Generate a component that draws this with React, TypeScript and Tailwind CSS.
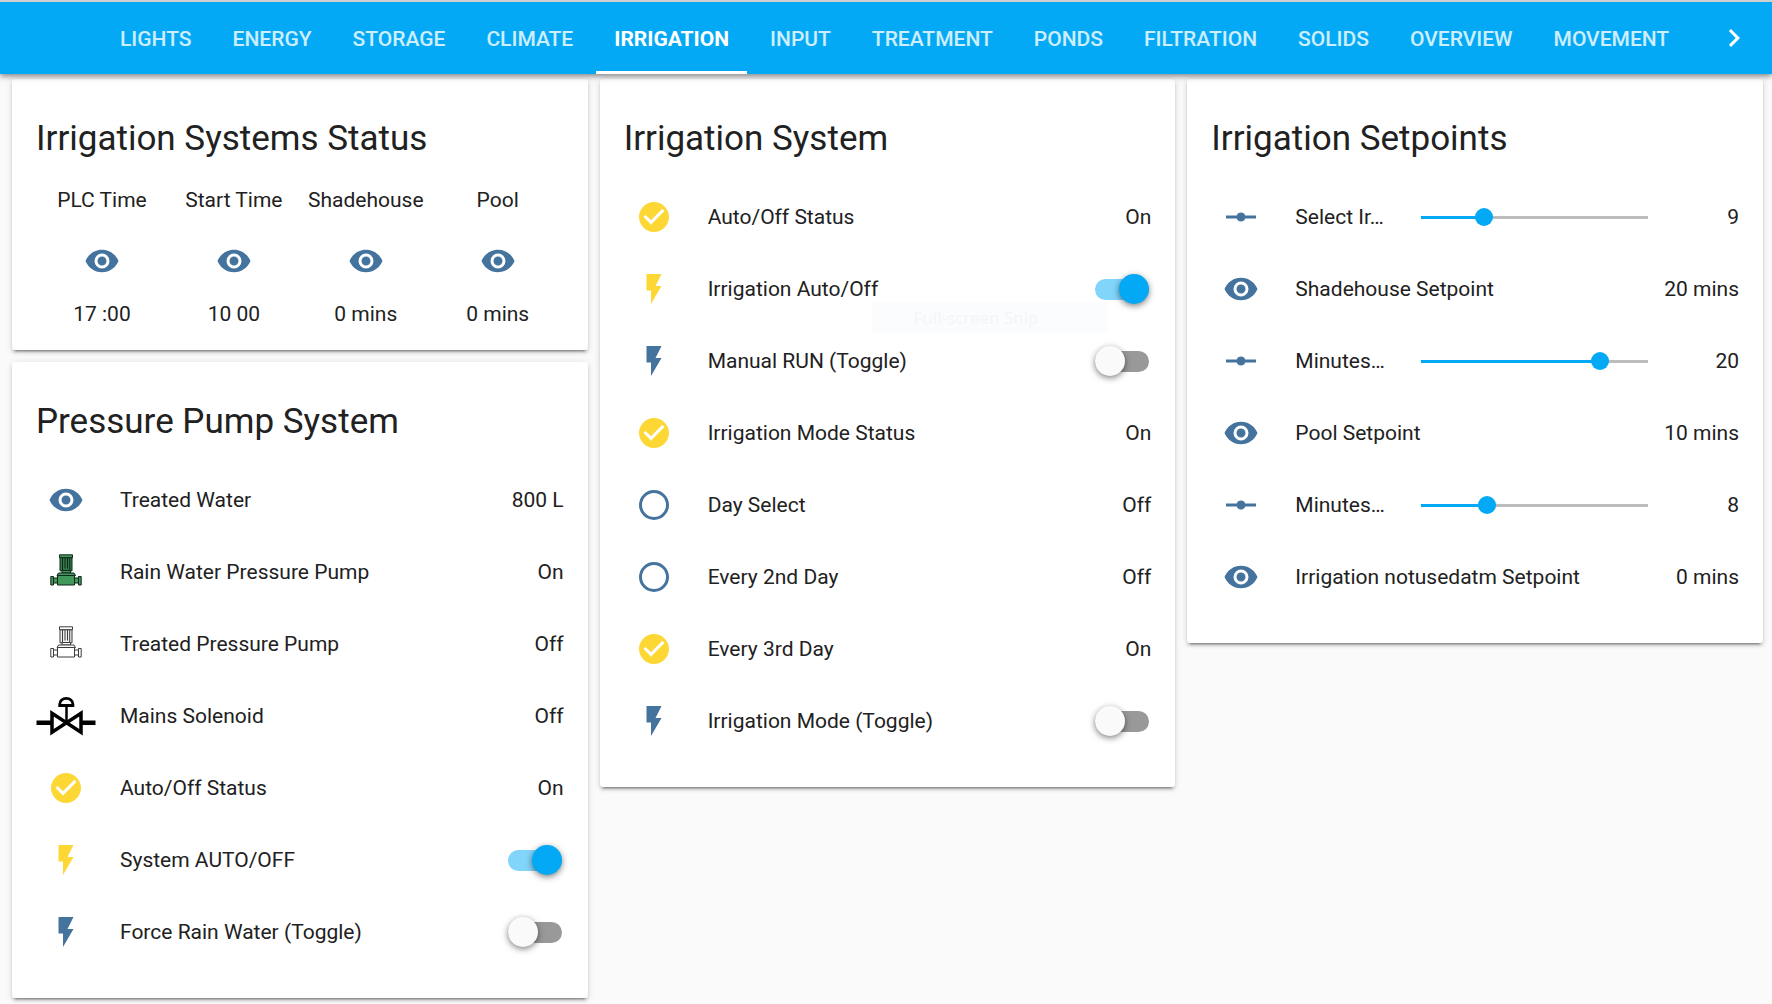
import { useState } from "react";

type IconName = "eye" | "flash" | "check" | "circle" | "ray" | "pump" | "valve";

type RowType = {
  icon: IconName;
  name: string;
  active?: boolean;
  value?: string;
  toggle?: boolean;
  slider?: { min: number; max: number; value: number };
};

const tabs = [
  "Lights",
  "Energy",
  "Storage",
  "Climate",
  "Irrigation",
  "Input",
  "Treatment",
  "Ponds",
  "Filtration",
  "Solids",
  "Overview",
  "Movement",
];

const glances = [
  { name: "PLC Time", value: "17 :00" },
  { name: "Start Time", value: "10 00" },
  { name: "Shadehouse", value: "0 mins" },
  { name: "Pool", value: "0 mins" },
];

const pumpRows: RowType[] = [
  { icon: "eye", name: "Treated Water", value: "800 L" },
  { icon: "pump", name: "Rain Water Pressure Pump", value: "On", active: true },
  { icon: "pump", name: "Treated Pressure Pump", value: "Off" },
  { icon: "valve", name: "Mains Solenoid", value: "Off" },
  { icon: "check", name: "Auto/Off Status", value: "On", active: true },
  { icon: "flash", name: "System AUTO/OFF", toggle: true, active: true },
  { icon: "flash", name: "Force Rain Water (Toggle)", toggle: true },
];

const systemRows: RowType[] = [
  { icon: "check", name: "Auto/Off Status", value: "On", active: true },
  { icon: "flash", name: "Irrigation Auto/Off", toggle: true, active: true },
  { icon: "flash", name: "Manual RUN (Toggle)", toggle: true },
  { icon: "check", name: "Irrigation Mode Status", value: "On", active: true },
  { icon: "circle", name: "Day Select", value: "Off" },
  { icon: "circle", name: "Every 2nd Day", value: "Off" },
  { icon: "check", name: "Every 3rd Day", value: "On", active: true },
  { icon: "flash", name: "Irrigation Mode (Toggle)", toggle: true },
];

const setpointRows: RowType[] = [
  { icon: "ray", name: "Select Ir…", slider: { min: 4, max: 22, value: 9 } },
  { icon: "eye", name: "Shadehouse Setpoint", value: "20 mins" },
  { icon: "ray", name: "Minutes…", slider: { min: 5, max: 24, value: 20 } },
  { icon: "eye", name: "Pool Setpoint", value: "10 mins" },
  { icon: "ray", name: "Minutes…", slider: { min: 1, max: 25, value: 8 } },
  { icon: "eye", name: "Irrigation notusedatm Setpoint", value: "0 mins" },
];

const paths: Record<string, string> = {
  eye: "M12,9A3,3 0 0,0 9,12A3,3 0 0,0 12,15A3,3 0 0,0 15,12A3,3 0 0,0 12,9M12,17A5,5 0 0,1 7,12A5,5 0 0,1 12,7A5,5 0 0,1 17,12A5,5 0 0,1 12,17M12,4.5C7,4.5 2.73,7.61 1,12C2.73,16.39 7,19.5 12,19.5C17,19.5 21.27,16.39 23,12C21.27,7.61 17,4.5 12,4.5Z",
  flash: "M7,2V13H10V22L17,10H13L17,2H7Z",
  check: "M12,2C6.5,2 2,6.5 2,12C2,17.5 6.5,22 12,22C17.5,22 22,17.5 22,12C22,6.5 17.5,2 12,2M10,17L5,12L6.41,10.59L10,14.17L17.59,6.58L19,8L10,17Z",
  circle: "M12,20A8,8 0 0,1 4,12A8,8 0 0,1 12,4A8,8 0 0,1 20,12A8,8 0 0,1 12,20M12,2A10,10 0 0,0 2,12A10,10 0 0,0 12,22A10,10 0 0,0 22,12A10,10 0 0,0 12,2Z",
  ray: "M2,11H9.17C9.58,9.83 10.69,9 12,9C13.31,9 14.42,9.83 14.83,11H22V13H14.83C14.42,14.17 13.31,15 12,15C10.69,15 9.58,14.17 9.17,13H2V11Z",
};

const PumpIcon = ({ on }: { on?: boolean }) => (
  <svg viewBox="-2 0 36 36" className="size-9" stroke={on ? "#10271a" : "#3c3c3c"} strokeWidth="1">
    <g fill={on ? "#41985a" : "#fff"}>
      <path d="M9.500 .800h13v3h-13z" />
      <path d="M10 3.800h12v13h-12z" fill={on ? "#2f7a46" : "#eee"} />
      <path d="M12.500 4v12.500M15 4v10.500M17.500 4v10.500M19.700 4v12.500" />
      <path d="M12 16.500h8.500v2.500h-8.500z" />
      <path d="M8.500 19h15.500l1.500 2.500H7z" />
      <path d="M7.500 21.500h17v9.500h-17z" />
      <path d="M3.500 24h4v5h-4zM24.500 24h4v5h-4z" />
      <path d="M.8 22.500h2.700v8.500H.8zM28.500 22.500h2.700v8.500h-2.700z" />
    </g>
  </svg>
);

const ValveIcon = () => (
  <svg viewBox="0 0 60 60" className="size-[60px]" fill="none" stroke="#000" strokeWidth="3.500">
    <path d="M.5 36.700H15M46 36.700h13.500" strokeWidth="4.500" />
    <path d="M16 27.200v19L30.500 36.700zM45 27.200v19L30.500 36.700z" />
    <path d="M30.500 36V20" strokeWidth="2.500" />
    <path d="M23.700 19.500v-1.200a6.600 6 0 0 1 13.200 0v1.200z" strokeWidth="2.800" />
  </svg>
);

const Icon = ({ name, active }: { name: IconName; active?: boolean }) => {
  if (name === "pump") return <PumpIcon on={active} />;
  if (name === "valve") return <ValveIcon />;
  return (
    <svg viewBox="0 0 24 24" className={active ? "size-9 fill-[#fdd835]" : "size-9 fill-[#44739e]"}>
      <path d={paths[name]} />
    </svg>
  );
};

const Toggle = ({ label, initial }: { label: string; initial: boolean }) => {
  const [on, setOn] = useState(initial);
  return (
    <button
      role="switch"
      aria-checked={on}
      aria-label={label}
      onClick={() => setOn(!on)}
      className={`mr-0.5 flex h-[21px] w-[54px] shrink-0 items-center rounded-full ${
        on ? "justify-end bg-[#81d4fa]" : "justify-start bg-[#999]"
      }`}
    >
      <span
        className={`size-[30px] shrink-0 rounded-full shadow-[0_2px_6px_rgba(0,0,0,0.5)] ${
          on ? "bg-[#03a9f4]" : "bg-[#fafafa]"
        }`}
      />
    </button>
  );
};

const Slider = ({ label, min, max, initial }: { label: string; min: number; max: number; initial: number }) => {
  const [value, setValue] = useState(initial);
  return (
    <>
      <div className="relative ml-8 h-[3px] flex-1 bg-[#bdbdbd]">
        <div className="h-full bg-[#03a9f4]" style={{ width: `${((value - min) / (max - min)) * 100}%` }} />
        <input
          type="range"
          aria-label={label}
          min={min}
          max={max}
          value={value}
          onChange={(e) => setValue(Number(e.target.value))}
          className="absolute -inset-x-[9px] -top-2 h-[18px] w-[calc(100%+18px)] cursor-pointer appearance-none bg-transparent [&::-webkit-slider-thumb]:size-[18px] [&::-webkit-slider-thumb]:appearance-none [&::-webkit-slider-thumb]:rounded-full [&::-webkit-slider-thumb]:bg-[#03a9f4]"
        />
      </div>
      <span className="w-[91px] text-right">{value}</span>
    </>
  );
};

const Row = ({ row }: { row: RowType }) => (
  <li className="flex h-[60px] items-center">
    <span className="mr-6 flex w-[60px] shrink-0 justify-center">
      <Icon name={row.icon} active={row.active} />
    </span>
    <span className={row.slider ? "w-[94px] truncate" : "flex-1 truncate"}>{row.name}</span>
    {row.value && <span>{row.value}</span>}
    {row.toggle && <Toggle label={row.name} initial={!!row.active} />}
    {row.slider && (
      <Slider label={row.name} min={row.slider.min} max={row.slider.max} initial={row.slider.value} />
    )}
  </li>
);

const Card = ({ title, children }: { title: string; children: React.ReactNode }) => (
  <section className="rounded-[3px] bg-white shadow-[0_3px_3px_rgba(0,0,0,0.14),0_1px_7px_rgba(0,0,0,0.12),0_4px_2px_-3px_rgba(0,0,0,0.4)]">
    <h2 className="px-6 pt-9 text-[35px] leading-[48px]">{title}</h2>
    {children}
  </section>
);

const EntitiesCard = ({ title, rows }: { title: string; rows: RowType[] }) => (
  <Card title={title}>
    <ul className="flex flex-col gap-3 px-6 pt-6 pb-9">
      {rows.map((row, i) => (
        <Row key={i} row={row} />
      ))}
    </ul>
  </Card>
);

const App = () => {
  const [selected, setSelected] = useState("Irrigation");

  return (
    <div className="min-h-screen bg-[#fafafa] font-['Roboto',sans-serif] text-[21px] leading-[30px] text-[#212121]">
      <header className="relative z-10 flex h-[74px] items-stretch border-t-2 border-[#d0d0d0] bg-[#03a9f4] pr-5 pl-[102px] text-white shadow-[0_2px_6px_rgba(0,0,0,0.5)]">
        <nav className="flex flex-1 gap-[5px] overflow-hidden">
          {tabs.map((tab) => (
            <button
              key={tab}
              onClick={() => setSelected(tab)}
              className={`border-b-[3px] px-[18px] pt-1 uppercase ${
                tab === selected ? "border-b-white font-bold" : "border-b-transparent font-medium text-white/80"
              }`}
            >
              {tab}
            </button>
          ))}
        </nav>
        <button aria-label="Scroll right">
          <svg viewBox="0 0 24 24" className="size-9 fill-white">
            <path d="M8.590,16.580L13.170,12L8.590,7.410L10,6L16,12L10,18L8.590,16.580Z" />
          </svg>
        </button>
      </header>

      <main className="grid grid-cols-3 items-start gap-3 pt-[5px] pr-[9px] pb-1.5 pl-3">
        <div className="flex flex-col gap-3">
          <Card title="Irrigation Systems Status">
            <div className="grid grid-cols-4 px-6 pt-[22px] pb-[21px]">
              {glances.map((item) => (
                <div key={item.name} className="flex flex-col items-center">
                  <span>{item.name}</span>
                  <span className="mt-7 mb-5">
                    <Icon name="eye" />
                  </span>
                  <span>{item.value}</span>
                </div>
              ))}
            </div>
          </Card>
          <EntitiesCard title="Pressure Pump System" rows={pumpRows} />
        </div>
        <div className="relative">
          <EntitiesCard title="Irrigation System" rows={systemRows} />
          <div className="pointer-events-none absolute top-[223px] left-[272px] h-[31px] w-[236px] bg-[#fbfcfe] pl-[42px] font-['Open_Sans',sans-serif] text-[17px] leading-[31px] text-[#f5f5f7]">
            Full-screen Snip
          </div>
        </div>
        <EntitiesCard title="Irrigation Setpoints" rows={setpointRows} />
      </main>
    </div>
  );
};

export default App;
